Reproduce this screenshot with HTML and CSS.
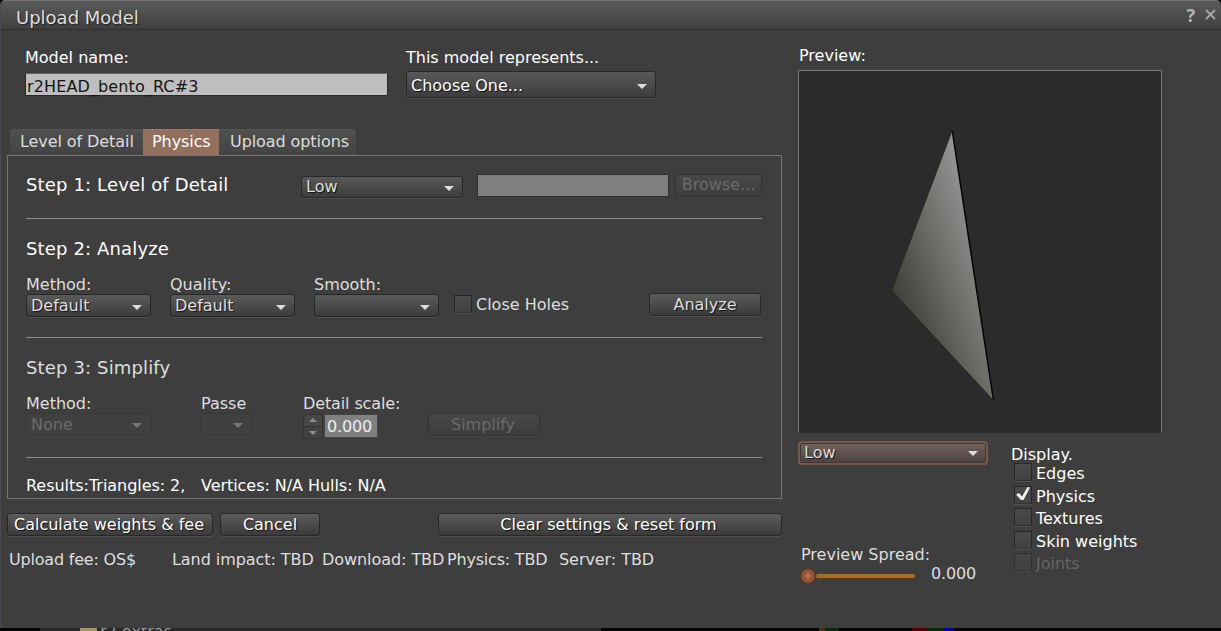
FILE: index.html
```html
<!DOCTYPE html>
<html lang="en">
<head>
<meta charset="utf-8">
<title>Upload Model</title>
<link rel="stylesheet" href="styles.css">
</head>
<body>
<svg class="defs" width="0" height="0">
  <symbol id="down" viewBox="0 0 10 5"><path d="M0 0H10L5 5Z" fill="currentColor"/></symbol>
</svg>
<div class="window">
  <header class="titlebar">
    <h1 class="title">Upload Model</h1>
    <span class="help">?</span>
    <svg class="close" width="11" height="11" viewBox="0 0 11 11"><path d="M1 1L10 10M10 1L1 10" stroke="#a6a6a6" stroke-width="1.8" fill="none"/></svg>
  </header>
  <div class="content">
    <main class="left">
      <section class="identity">
        <div class="name-field">
          <div class="label bright">Model name:</div>
          <div class="name-input">r2HEAD_bento_RC#3</div>
        </div>
        <div class="kind-field">
          <div class="label bright">This model represents...</div>
          <div class="select tall bright"><span>Choose One...</span><svg class="arrow"><use href="#down"/></svg></div>
        </div>
      </section>
      <nav class="tabs">
        <div class="tab tab-lod">Level of Detail</div>
        <div class="tab tab-physics active">Physics</div>
        <div class="tab tab-options">Upload options</div>
      </nav>
      <section class="panel">
        <div class="step step-one">
          <h2 class="heading">Step 1: Level of Detail</h2>
          <div class="select lod-select"><span>Low</span><svg class="arrow"><use href="#down"/></svg></div>
          <div class="file-field"></div>
          <div class="button disabled browse">Browse...</div>
        </div>
        <div class="step step-two">
          <h2 class="heading">Step 2: Analyze</h2>
          <div class="analyze-row">
            <div><div class="label">Method:</div><div class="select"><span>Default</span><svg class="arrow"><use href="#down"/></svg></div></div>
            <div><div class="label">Quality:</div><div class="select"><span>Default</span><svg class="arrow"><use href="#down"/></svg></div></div>
            <div><div class="label">Smooth:</div><div class="select"><span></span><svg class="arrow"><use href="#down"/></svg></div></div>
            <div class="check holes"><i class="box"></i><span>Close Holes</span></div>
            <div class="button analyze">Analyze</div>
          </div>
        </div>
        <div class="step step-three">
          <h2 class="heading dim">Step 3: Simplify</h2>
          <div class="simplify-row">
            <div><div class="label">Method:</div><div class="select disabled"><span>None</span><svg class="arrow"><use href="#down"/></svg></div></div>
            <div><div class="label">Passe</div><div class="select disabled passes"><span></span><svg class="arrow"><use href="#down"/></svg></div></div>
            <div><div class="label tight">Detail scale:</div>
              <div class="spinner">
                <div class="steppers">
                  <svg width="8" height="4" viewBox="0 0 8 4"><path d="M0 4L4 0L8 4Z" fill="#8c8c8c"/></svg>
                  <svg width="8" height="4" viewBox="0 0 8 4"><path d="M0 0L4 4L8 0Z" fill="#8c8c8c"/></svg>
                </div>
                <div class="number">0.000</div>
              </div>
            </div>
            <div class="button disabled simplify">Simplify</div>
          </div>
        </div>
        <div class="results">
          <span>Results:</span><span>Triangles: 2,</span><span>Vertices: N/A</span><span>Hulls: N/A</span>
        </div>
      </section>
      <div class="actions">
        <div class="button bright calculate">Calculate weights &amp; fee</div>
        <div class="button bright cancel">Cancel</div>
        <div class="button bright reset">Clear settings &amp; reset form</div>
      </div>
      <div class="fees">
        <span class="tight">Upload fee: OS$</span><span>Land impact: TBD</span><span>Download: TBD</span><span class="tight">Physics: TBD</span><span>Server: TBD</span>
      </div>
    </main>
    <aside class="right">
      <div class="label bright preview-label">Preview:</div>
      <div class="preview">
        <svg width="362" height="362" viewBox="799 71 362 362">
          <defs>
            <linearGradient id="face" gradientUnits="userSpaceOnUse" x1="952" y1="131" x2="847.4" y2="169.1">
              <stop offset="0" stop-color="#969695"/><stop offset=".5" stop-color="#6b6b68"/><stop offset="1" stop-color="#3f3f38"/>
            </linearGradient>
          </defs>
          <path d="M952 131L891.500 290.500L993.500 400.500Z" fill="url(#face)"/>
          <path d="M952 131L891.500 290.500L993.500 400.500" stroke="#252518" stroke-width=".8" fill="none"/>
          <path d="M952.300 131L993.500 400.500" stroke="#050505" stroke-width="1.500"/>
        </svg>
      </div>
      <div class="preview-controls">
        <div class="preview-settings">
          <div class="select focused"><span>Low</span><svg class="arrow"><use href="#down"/></svg></div>
          <div class="label spread-label">Preview Spread:</div>
          <div class="slider">
            <svg width="120" height="18" viewBox="0 0 120 18">
              <rect x="9" y="6" width="110" height="6" rx="3" fill="#4b3f30"/>
              <rect x="12" y="7" width="105" height="4" rx="2" fill="#a96d1d"/>
              <circle cx="10" cy="9" r="8.500" fill="#4a332a"/><circle cx="10" cy="9" r="7" fill="#8f5439"/>
              <path d="M6.500 9H13.500M10 5.500V12.500" stroke="#bd7049" stroke-width="2"/>
            </svg>
            <span class="spread-value">0.000</span>
          </div>
        </div>
        <div class="display bright">
          <div class="label">Display.</div>
          <div class="check"><i class="box"></i><span>Edges</span></div>
          <div class="check"><i class="box"><svg class="tick" width="16" height="15" viewBox="0 0 16 15"><path d="M1 7.500L4 6L7 9.500L12.500 0L15 .5L8.500 13H6Z" fill="#f0f0f0"/></svg></i><span>Physics</span></div>
          <div class="check"><i class="box"></i><span>Textures</span></div>
          <div class="check"><i class="box"></i><span>Skin weights</span></div>
          <div class="check off"><i class="box"></i><span>Joints</span></div>
        </div>
      </div>
    </aside>
  </div>
</div>
<footer class="backdrop">
  <i class="behind"></i><i class="folder"></i><i class="behind-text">r2 extras</i><i class="gap"></i><i class="pixels-a"></i><i class="pixels-b"></i>
</footer>
</body>
</html>
```
FILE: styles.css
```css
* { box-sizing: border-box; }
body {
  margin: 0;
  width: 1221px;
  height: 631px;
  overflow: hidden;
  background: #000;
  color: #dedede;
  font: 16px/20px "DejaVu Sans", sans-serif;
  white-space: nowrap;
}
.defs { display: block; width: 0; height: 0; }
.window { height: 628px; background: #3e3e3e; border-left: 1px solid #4a4b50; border-radius: 5px 5px 0 0; overflow: hidden; }
.titlebar {
  display: flex;
  height: 30px;
  padding: 0 5px 0 15px;
  background: linear-gradient(#5b5b5b, #3f3f3f);
  border-top: 1px solid #727272;
  border-bottom: 1px solid #303030;
}
.title { flex: 1; margin: 6px 0 0; font-size: 18px; font-weight: 400; line-height: 22px; text-shadow: 1px 1px 1px #222; }
.help { margin: 4px 10px 0 0; color: #b4b4b4; font: bold 18px/20px "Noto Sans", sans-serif; }
.close { margin-top: 8px; }
.content { display: flex; padding-left: 6px; }
.left { width: 775px; }
.bright { color: #fff; }
.label { height: 20px; }
.tight { letter-spacing: -.12px; }

.identity { display: flex; padding: 18px 0 0 18px; height: 99px; }
.name-field { width: 381px; }
.name-input {
  width: 363px;
  height: 23px;
  margin-top: 5px;
  padding: 3px 1px;
  background: #bebebe;
  border: 1px solid #292929;
  border-top-color: #666;
  color: #141414;
  letter-spacing: .12px;
  line-height: 20px;
}

.select {
  display: flex;
  justify-content: space-between;
  width: 125px;
  height: 23px;
  padding: 0 8px 0 4px;
  background: linear-gradient(#595959, #3c3c3c);
  border: 1px solid #282828;
  border-radius: 3px;
  box-shadow: 0 1px 0 #505050;
  line-height: 21px;
  text-shadow: 1px 1px 1px #111;
}
.select .arrow { width: 10px; height: 5px; margin-top: 10px; color: #dcdcdc; }
.select.tall { width: 250px; height: 27px; margin-top: 3px; line-height: 27px; }
.select.tall .arrow { margin-top: 12px; }
.select.disabled { background: #404040; border-color: #383838; box-shadow: 0 1px #454545; color: #6a6a6a; text-shadow: none; }
.select.disabled .arrow { color: #777; margin-top: 9px; }

.button {
  height: 23px;
  background: linear-gradient(#5b5b5b, #3b3b3b);
  border: 1px solid #282828;
  border-radius: 3px;
  box-shadow: 0 1px 0 #505050;
  line-height: 21px;
  text-align: center;
  text-shadow: 1px 1px 1px #111;
}
.button.disabled { background: linear-gradient(#484848, #3d3d3d); border-color: #333; box-shadow: 0 1px #464646; color: #6b6b6b; text-shadow: none; }

.tabs { display: flex; height: 26px; padding-left: 3px; }
.tab { height: 26px; border-top: 1px solid #555; background: linear-gradient(#505050, #434343); letter-spacing: -.08px; line-height: 23px; }
.tab-lod { width: 133px; padding-left: 10px; border-radius: 4px 0 0 0; }
.tab-physics { width: 76px; padding-left: 9px; }
.tab-options { width: 137px; padding-left: 11px; border-radius: 0 4px 0 0; }
.tab.active { background: #92705d; border-color: #9e7a66; color: #fff; }

.panel { width: 775px; height: 344px; padding: 0 19px 0 18px; border: 1px solid #777; }
.step { border-bottom: 1px solid #8c8c8c; }
.heading { margin: 0; height: 24px; font-size: 18px; font-weight: 400; letter-spacing: .14px; line-height: 22px; color: #fff; }
.heading.dim { color: #dedede; }
.step-one { display: flex; height: 63px; padding-top: 18px; }
.step-one .heading { width: 276px; }
.lod-select { width: 162px; height: 22px; margin-top: 2px; margin-left: -1px; line-height: 19px; }
.lod-select .arrow { margin-top: 9px; }
.file-field { width: 192px; height: 23px; margin: 0 6px 0 14px; background: #7f7f7f; border: 1px solid #303030; }
.browse { width: 87px; line-height: 20px; }
.step-two { height: 119px; padding-top: 19px; }
.analyze-row { display: grid; grid-template-columns: 144px 144px 140px 195px 112px; padding-top: 13px; }
.analyze-row .label { height: 19px; }
.check { display: flex; }
.box { display: block; width: 18px; height: 18px; background: linear-gradient(#4a4a4a, #424242); border: 1px solid #272727; border-bottom-color: #333; box-shadow: 0 1px #505050; }
.check span { margin-left: 4px; }
.holes { padding-top: 20px; }
.analyze { margin-top: 18px; height: 23px; }
.step-three { height: 120px; padding-top: 19px; }
.simplify-row { display: grid; grid-template-columns: 175px 102px 125px 112px; padding-top: 13px; }
.simplify-row .label { height: 19px; }
.passes { width: 51px; }
.simplify { margin-top: 19px; padding-right: 2px; }
.spinner { display: flex; padding-top: 1px; }
.steppers { display: flex; flex-direction: column; justify-content: space-between; align-items: center; width: 20px; height: 25px; padding: 3px 0; background: linear-gradient(#474747 0 48%, #333 48% 52%, #424242 52%); border: 1px solid #333; border-radius: 3px; }
.number { width: 54px; height: 24px; margin-left: 1px; padding: 1px 0 0 2px; background: #808080; border: 1px solid #444; color: #eee; letter-spacing: -.15px; line-height: 21px; }
.results { display: grid; grid-template-columns: 63px 112px 107px auto; padding-top: 18px; color: #fff; letter-spacing: -.05px; }

.actions { display: flex; padding-top: 14px; }
.calculate { width: 206px; padding-right: 2px; }
.cancel { width: 100px; margin-left: 7px; }
.reset { width: 344px; margin-left: 118px; padding-right: 3px; }
.fees { display: grid; grid-template-columns: 163px 150px 125px 112px auto; padding: 14px 0 0 2px; letter-spacing: -.06px; }
.fees .tight { letter-spacing: -.2px; }

.right { width: 400px; padding: 16px 0 0 16px; }
.preview-label { height: 24px; padding-left: 1px; }
.preview { width: 364px; height: 363px; background: #2b2b2b; border: 1px solid #777; border-bottom: 0; overflow: hidden; }
.preview svg { display: block; }
.preview-controls { display: flex; }
.preview-settings { width: 213px; padding-top: 8px; }
.select.focused { width: 190px; height: 24px; background: linear-gradient(#72625b, #4b4341); border: 2px solid #75594b; border-radius: 4px; box-shadow: inset 0 0 0 1px #46342d; line-height: 19px; }
.focused .arrow { margin-top: 8px; }
.spread-label { margin-top: 80px; padding-left: 3px; }
.slider { display: flex; padding-top: 2px; }
.spread-value { margin: -3px 0 0 13px; letter-spacing: -.15px; }
.display { padding: 12px 0 0 0; }
.display .label { height: 18px; }
.display .check { height: 22.5px; padding-left: 3px; }
.display .check span { padding-top: 1px; }
.display .off { color: #646464; }
.off .box { opacity: .6; }
.tick { display: block; }

.backdrop { display: flex; height: 3px; overflow: hidden; background: #000; }
.behind { width: 80px; background: linear-gradient(90deg, #000 50%, #262626 50%); }
.folder { width: 17px; background: #a49561; }
.behind-text { width: 504px; padding-left: 3px; background: #262626; color: #999; font-style: normal; line-height: 8px; }
.gap { width: 218px; }
.pixels-a { width: 93px; background: linear-gradient(90deg, #4a3206 6px, #0b2c09 6px 20px, #000 20px); }
.pixels-b { width: 42px; background: linear-gradient(90deg, #500 16px, #032c03 16px 32px, #00a 32px); }
```
